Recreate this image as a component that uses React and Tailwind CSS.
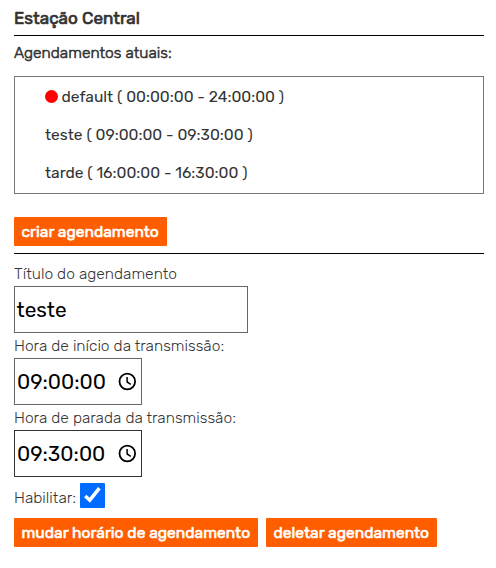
const schedules = [
  { name: 'default ( 00:00:00 - 24:00:00 )', active: true },
  { name: 'teste ( 09:00:00 - 09:30:00 )', active: false },
  { name: 'tarde ( 16:00:00 - 16:30:00 )', active: false },
];

function Action({ children, className }) {
  return (
    <button className={`h-[29px] rounded-[1px] bg-[#ff5e00] pl-[7.5px] text-left text-[15.6px] leading-[29px] font-normal whitespace-nowrap text-white [-webkit-text-stroke:0.6px_#fff] ${className}`}>
      {children}
    </button>
  );
}

function Clock() {
  return (
    <svg className="mr-[4px] h-[20px] w-[20px]" viewBox="0 0 20 20" fill="none" stroke="#000" strokeWidth="1.8">
      <circle cx="10.3" cy="9.5" r="7.8" />
      <path d="M10.1 5v5l3.7 2.4" strokeWidth="1.5" />
    </svg>
  );
}

function TimeField({ label, value, border }) {
  return (
    <div className="h-[72px]">
      <label className="block h-[25px] leading-[25px] font-light">{label}</label>
      <div className={`flex h-[47px] w-[128px] items-center justify-between border pl-[2px] text-[20.8px] text-black ${border}`}>
        <span className="pt-[2px] whitespace-nowrap">{value}</span>
        <Clock />
      </div>
    </div>
  );
}

export default function App() {
  return (
    <main className="h-[568px] w-[496px] overflow-hidden bg-white pr-[12px] pl-[14px] font-['Rubik','Roboto',sans-serif] text-[15.6px] text-[#333]">
      <h1 className="h-[36px] border-b border-black pt-[6px] text-[17.1px] leading-[24px] font-normal [-webkit-text-stroke:0.7px_#333]">Estação Central</h1>
      <h2 className="h-[40px] pt-[5px] leading-[24px] font-light [-webkit-text-stroke:0.6px_#333]">Agendamentos atuais:</h2>
      <ul className="h-[118px] border border-[#777] pl-[30px]">
        {schedules.map((s) => (
          <li key={s.name} className="flex h-[38.4px] items-center whitespace-nowrap">
            {s.active && <span className="mt-[1px] mr-[3.5px] h-[13px] w-[13px] rounded-full bg-[#f00]" />}
            <span>{s.name}</span>
          </li>
        ))}
      </ul>
      <div className="mt-[23px] h-[37px] border-b border-black">
        <Action className="w-[153px]">criar agendamento</Action>
      </div>
      <form>
        <div className="h-[79px] pt-[7px]">
          <label className="block h-[25px] leading-[25px] font-light">Título do agendamento</label>
          <div className="flex h-[47px] w-[234px] items-center border border-[#666] pl-[1.5px] text-[20.8px] text-black">
            <span className="pt-[2px]">teste</span>
          </div>
        </div>
        <TimeField label="Hora de início da transmissão:" value="09:00:00" border="border-[#666]" />
        <TimeField label="Hora de parada da transmissão:" value="09:30:00" border="border-[#333]" />
        <div className="flex h-[41px] pt-[6px]">
          <label className="w-[66px] pt-[3px] leading-[24px] font-light whitespace-nowrap">Habilitar:</label>
          <svg className="h-[25px] w-[25px] rounded-[1px] bg-[#006bff]" viewBox="0 0 25 25">
            <path d="M5.2 13 9.8 17.2 19.4 5.2" fill="none" stroke="#fff" strokeWidth="3.5" />
          </svg>
        </div>
        <div className="flex gap-[8px]">
          <Action className="w-[244px]">mudar horário de agendamento</Action>
          <Action className="w-[171px]">deletar agendamento</Action>
        </div>
      </form>
    </main>
  );
}
